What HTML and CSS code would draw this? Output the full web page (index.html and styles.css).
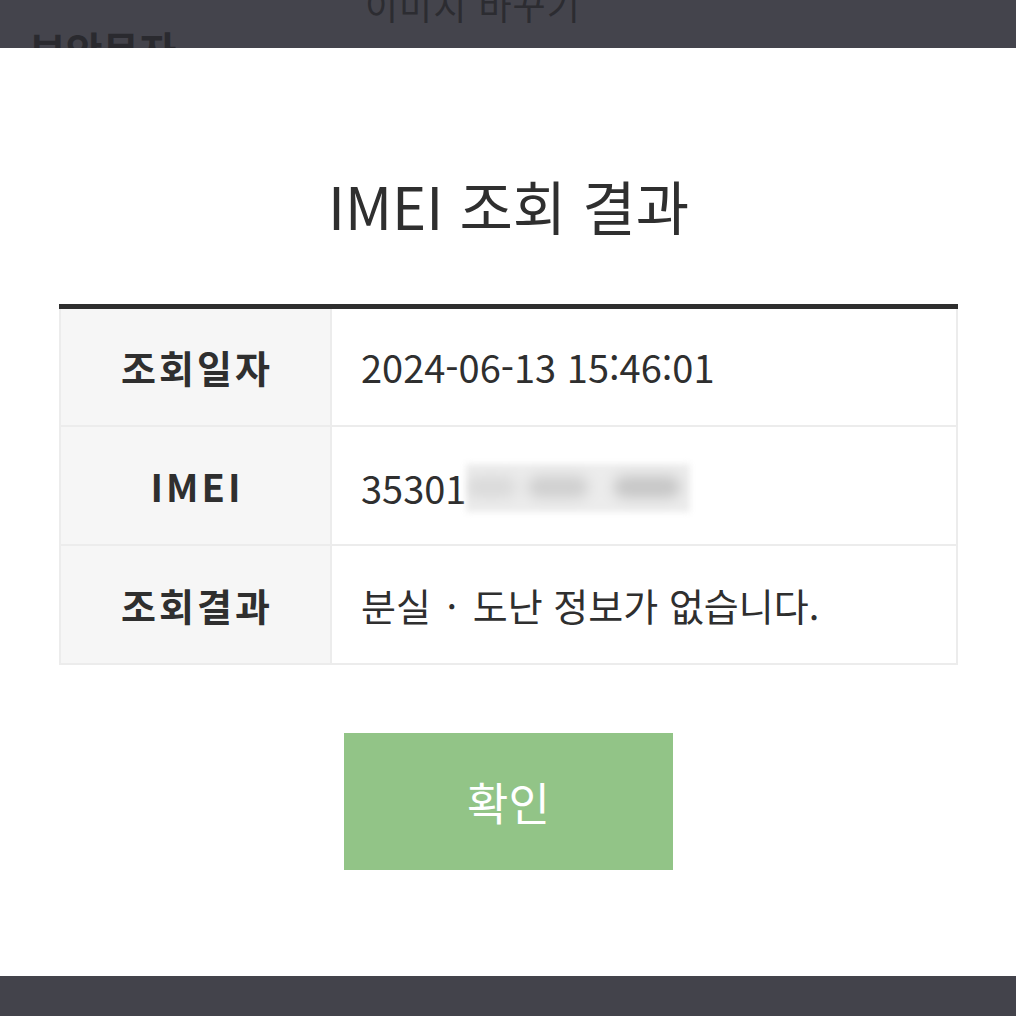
FILE: index.html
```html
<!DOCTYPE html>
<html lang="ko">
<head>
<meta charset="utf-8">
<link rel="stylesheet" href="styles.css">
</head>
<body>
<div class="backdrop-top">
  <div class="bg-title">이미지 바꾸기</div>
  <div class="bg-label">보안문자</div>
</div>
<div class="modal">
  <h1 class="title">IMEI 조회 결과</h1>
  <table class="result">
    <tr>
      <th>조회일자</th>
      <td>2024-06-13 15:46:01</td>
    </tr>
    <tr>
      <th>IMEI</th>
      <td><span class="imei">35301</span><span class="masked"><span class="blob b1"></span><span class="blob b2"></span><span class="blob b3"></span></span></td>
    </tr>
    <tr>
      <th>조회결과</th>
      <td>분실 <span class="sep">·</span> 도난 정보가 없습니다.</td>
    </tr>
  </table>
  <div class="actions">
    <button class="confirm">확인</button>
  </div>
</div>
<div class="backdrop-bottom"></div>
</body>
</html>
```
FILE: styles.css
```css
html, body {
  margin: 0;
  padding: 0;
  background: #43434b;
  font-family: "Noto Sans CJK KR", "Noto Sans", sans-serif;
  color: #333;
}
.backdrop-top {
  height: 48px;
  position: relative;
  overflow: hidden;
  background: #44444c;
}
.bg-title {
  position: absolute;
  left: 365px;
  top: -22px;
  font-size: 36px;
  color: #2c2c31;
  letter-spacing: 1px;
}
.bg-label {
  position: absolute;
  left: 29px;
  top: 20px;
  font-size: 40px;
  font-weight: 700;
  color: #2a2a2f;
}
.modal {
  background: #fff;
  height: 928px;
  box-sizing: border-box;
  padding: 117px 58px 0 59px;
}
.title {
  margin: 0;
  height: 80px;
  line-height: 80px;
  font-size: 58px;
  font-weight: 400;
  text-align: center;
  color: #2f2f2f;
}
.result {
  margin-top: 59px;
  width: 899px;
  border-collapse: collapse;
  border-top: 5px solid #2e2e2e;
  table-layout: fixed;
}
.result th, .result td {
  height: 119px;
  border: 2px solid #ececec;
  font-size: 38px;
  padding: 0;
  box-sizing: border-box;
}
.result tr:first-child th, .result tr:first-child td {
  border-top: none;
}
.result th {
  width: 271px;
  background: #f6f6f6;
  font-weight: 700;
  letter-spacing: 3px;
  text-indent: 3px;
  text-align: center;
  color: #2f2f2f;
}
.result td {
  padding-left: 29px;
  color: #2f2f2f;
  white-space: nowrap;
}
.sep {
  padding: 0 5px;
}
.imei {
  vertical-align: middle;
}
.masked {
  display: inline-block;
  vertical-align: middle;
  width: 224px;
  height: 48px;
  background: #ececec;
  filter: blur(3px);
  position: relative;
  overflow: hidden;
}
.blob {
  position: absolute;
  top: 12px;
  height: 22px;
  background: #cfcfcf;
  border-radius: 10px;
  filter: blur(6px);
}
.b1 { left: 0; width: 50px; background: #dadada; }
.b2 { left: 62px; width: 60px; }
.b3 { left: 148px; width: 66px; background: #c6c6c6; }
.actions {
  display: flex;
  justify-content: center;
  margin-top: 68px;
}
.confirm {
  width: 329px;
  height: 137px;
  border: none;
  background: #92c487;
  color: #fff;
  font-family: "Noto Sans CJK KR", "Noto Sans", sans-serif;
  font-size: 45px;
  padding: 0;
}
.backdrop-bottom {
  height: 40px;
  background: #43434b;
}
```
